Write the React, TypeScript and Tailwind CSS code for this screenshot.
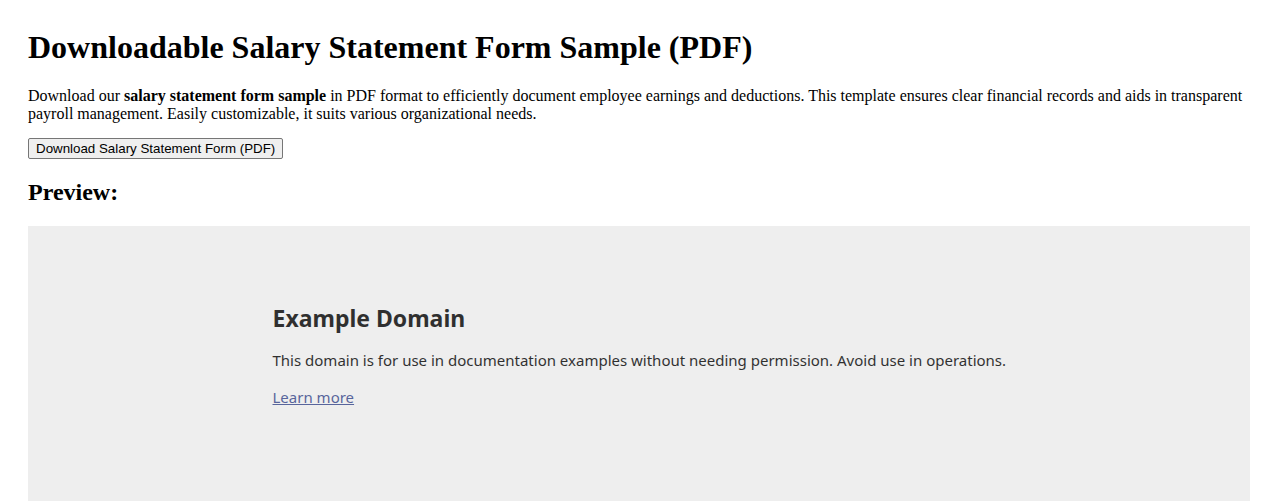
export default function App() {
  return (
    <div className="h-screen overflow-hidden bg-white px-7 pt-2 font-['Liberation_Serif','Times_New_Roman',serif] text-black">
      {/* Header */}
      <h1 className="mt-[21.44px] mb-[21px] text-[32px] font-bold leading-[1.15]">
        Downloadable Salary Statement Form Sample (PDF)
      </h1>
      <p className="text-base leading-[18px]">
        Download our <strong className="font-bold">salary statement form sample</strong> in PDF format to efficiently
        document employee earnings and deductions. This template ensures clear financial records and aids in
        transparent payroll management. Easily customizable, it suits various organizational needs.
      </p>

      <button className="mt-[15px] h-[21px] rounded-[2px] border border-[#767676] bg-[#efefef] px-[7px] font-['Liberation_Sans',Arial,sans-serif] text-[13.33px] leading-none text-black">
        Download Salary Statement Form (PDF)
      </button>

      <h2 className="mt-[19px] mb-[19px] text-2xl font-bold leading-[1.15]">Preview:</h2>

      {/* Preview frame */}
      <div className="h-[400px] w-full bg-[#eeeeee] pt-[76px]">
        <div className="mx-auto w-[733px] font-['Noto_Sans',sans-serif] text-black">
          <h1 className="mb-4 text-[23px] font-bold leading-[32px] opacity-80">Example Domain</h1>
          <p className="mb-4 text-[15px] leading-[21px] opacity-80 whitespace-nowrap">
            This domain is for use in documentation examples without needing permission. Avoid use in operations.
          </p>
          <p className="text-[15px] leading-[21px] opacity-80">
            <a href="#" className="text-[#334488] underline">Learn more</a>
          </p>
        </div>
      </div>
    </div>
  )
}
